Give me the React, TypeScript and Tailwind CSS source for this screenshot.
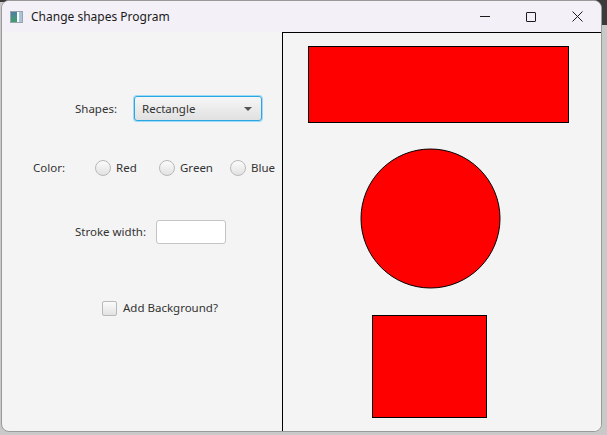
import { useState } from 'react';

const font = { fontFamily: '"Noto Sans", "Open Sans", sans-serif' };

function Radio({ label }: { label: string }) {
  return (
    <div className="flex items-center gap-[5px]">
      <span className="w-4 h-4 rounded-full border border-[#b9b9b9] bg-gradient-to-b from-[#fbfbfb] to-[#e2e2e2]" />
      <span className="text-[#333]">{label}</span>
    </div>
  );
}

export default function App() {
  const [shape] = useState('Rectangle');

  return (
    <div className="w-[607px] h-[435px] bg-[#c9c9c9] overflow-hidden relative" style={font}>
      {/* dark desktop strip at top right */}
      <div className="absolute right-0 top-0 w-[8px] h-[25px] bg-[#3b3b3b]" />
      <div className="absolute left-0 top-0 w-[607px] h-[2px] bg-[#3b3b3b]" />

      <div className="relative ml-[1px] w-[601px] h-[432px] rounded-lg overflow-hidden border border-[#9a9a9a] flex flex-col bg-[#f4f4f4]">
        {/* Title bar */}
        <div className="h-[31px] bg-[#f3f0f7] flex items-center shrink-0">
          <div className="ml-[8px] w-[13px] h-[12px] flex border border-[#9aa3ad] bg-white">
            <div className="w-[6px] h-full bg-gradient-to-b from-[#4f7fa0] to-[#3f9f6a]" />
            <div className="w-[2px]" />
            <div className="w-[3px] h-full bg-[#a8c6d8]" />
          </div>
          <span className="ml-[8px] text-[12px] text-[#1b1b1b]">Change shapes Program</span>
          <div className="ml-auto flex items-center h-full">
            <div className="w-[46px] h-full flex items-center justify-center">
              <div className="w-[10px] h-px bg-[#1b1b1b]" />
            </div>
            <div className="w-[46px] h-full flex items-center justify-center">
              <div className="w-[10px] h-[10px] border border-[#1b1b1b] rounded-[1px]" />
            </div>
            <div className="w-[46px] h-full flex items-center justify-center mr-[1px]">
              <svg width="11" height="11" viewBox="0 0 11 11">
                <path d="M0.5 0.5 L10.5 10.5 M10.5 0.5 L0.5 10.5" stroke="#1b1b1b" strokeWidth="1" />
              </svg>
            </div>
          </div>
        </div>

        {/* Body */}
        <div className="flex flex-1">
          {/* Controls */}
          <div className="w-[280px] shrink-0 pt-[64px] text-[11.5px] text-[#333]">
            <div className="flex items-center h-[25px] pl-[73px]">
              <span className="w-[59px]">Shapes:</span>
              <div className="w-[128px] h-[25px] rounded-[3px] border border-[#2aa6e0] shadow-[0_0_0_1px_#9fd9f5] bg-gradient-to-b from-[#f6f6f6] to-[#e1e1e1] flex items-center pl-[7px] pr-[9px]">
                <span className="text-[#333]">{shape}</span>
                <svg className="ml-auto" width="8" height="4" viewBox="0 0 8 4">
                  <path d="M0 0 L8 0 L4 4 Z" fill="#555" />
                </svg>
              </div>
            </div>

            <div className="flex items-center h-[18px] mt-[38px] pl-[31px]">
              <span className="w-[62px]">Color:</span>
              <div className="w-[64px]">
                <Radio label="Red" />
              </div>
              <div className="w-[71px]">
                <Radio label="Green" />
              </div>
              <Radio label="Blue" />
            </div>

            <div className="flex items-center h-[24px] mt-[43px] pl-[73px]">
              <span className="w-[81px]">Stroke width:</span>
              <div className="w-[70px] h-[24px] rounded-[3px] border border-[#c4c4c4] bg-white" />
            </div>

            <div className="flex items-center h-[16px] mt-[56px] pl-[100px]">
              <span className="w-[15px] h-[15px] rounded-[2px] border border-[#b9b9b9] bg-gradient-to-b from-[#fbfbfb] to-[#e2e2e2]" />
              <span className="ml-[6px]">Add Background?</span>
            </div>
          </div>

          {/* Canvas */}
          <div className="flex-1 border-l border-t border-b border-black bg-[#f4f4f4] -mr-[4px]">
            <svg width="330" height="400" className="block">
              <rect x="25.5" y="13.5" width="260" height="76" fill="#ff0000" stroke="#000" strokeWidth="1" />
              <circle cx="147.5" cy="185.5" r="69.5" fill="#ff0000" stroke="#000" strokeWidth="1" />
              <rect x="89.5" y="282.5" width="114" height="102" fill="#ff0000" stroke="#000" strokeWidth="1" />
            </svg>
          </div>
        </div>
      </div>
    </div>
  );
}
